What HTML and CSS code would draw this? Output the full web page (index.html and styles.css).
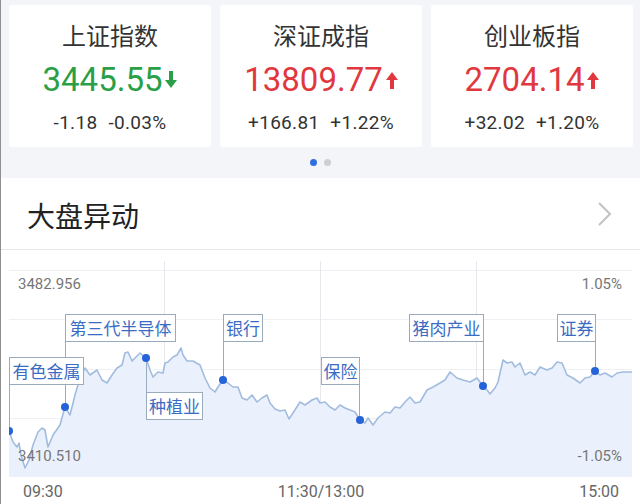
FILE: index.html
```html
<!DOCTYPE html>
<html lang="zh-CN">
<head>
<meta charset="utf-8">
<link rel="stylesheet" href="styles.css">
</head>
<body>
<div class="page">
  <div class="cards">
    <div class="card">
      <div class="c-title">上证指数</div>
      <div class="c-num down">3445.55<svg class="arrow" viewBox="0 0 12 18"><rect x="4" y="0" width="4" height="10"/><polygon points="0,9 12,9 6,17"/></svg></div>
      <div class="c-sub"><span>-1.18</span><span>-0.03%</span></div>
    </div>
    <div class="card">
      <div class="c-title">深证成指</div>
      <div class="c-num up">13809.77<svg class="arrow" viewBox="0 0 12 18"><polygon points="0,9 12,9 6,1"/><rect x="4" y="8" width="4" height="10"/></svg></div>
      <div class="c-sub"><span>+166.81</span><span>+1.22%</span></div>
    </div>
    <div class="card">
      <div class="c-title">创业板指</div>
      <div class="c-num up">2704.14<svg class="arrow" viewBox="0 0 12 18"><polygon points="0,9 12,9 6,1"/><rect x="4" y="8" width="4" height="10"/></svg></div>
      <div class="c-sub"><span>+32.02</span><span>+1.20%</span></div>
    </div>
  </div>
  <div class="dots"><span class="dot on"></span><span class="dot"></span></div>
  <div class="panel">
    <div class="head">
      <div class="head-title">大盘异动</div>
      <svg class="chev" viewBox="0 0 16 26"><polyline points="2,2 13,13 2,24"/></svg>
    </div>
    <div class="chart-wrap">
      <div class="chart">
        <svg class="plot" viewBox="9 261 623 217" width="623" height="217">
          <g class="grid">
            <line x1="9" y1="270.5" x2="632" y2="270.5"/>
            <line x1="9" y1="319.5" x2="632" y2="319.5"/>
            <line x1="9" y1="369.5" x2="632" y2="369.5"/>
            <line x1="9" y1="418.5" x2="632" y2="418.5"/>
            <line x1="9" y1="468.5" x2="632" y2="468.5"/>
            <line x1="164.5" y1="261" x2="164.5" y2="477"/>
            <line x1="320.5" y1="261" x2="320.5" y2="477"/>
            <line x1="476.5" y1="261" x2="476.5" y2="477"/>
          </g>
          <path class="area" d="M9,431 L13,442 L17,447 L19,443 L21,455 L25,468 L29,460 L33,445 L38,432 L42,428 L45,430 L48,447 L53,435 L60,425 L65,407 L70,415 L75,395 L80,378 L85,368 L90,375 L97,370 L102,380 L107,383 L112,375 L117,368 L122,365 L125,353 L128,352 L132,361 L135,358 L140,353 L146,358 L150,370 L153,377 L158,372 L163,373 L165,363 L168,362 L173,357 L177,355 L181,348 L183,355 L187,361 L193,361 L200,365 L205,378 L210,388 L215,392 L218,387 L223,380 L228,383 L233,387 L238,387 L242,398 L247,400 L252,395 L257,402 L262,398 L267,395 L270,403 L275,409 L280,411 L285,410 L289,419 L293,413 L300,402 L305,405 L312,400 L317,398 L320,403 L325,402 L330,407 L335,410 L340,405 L345,408 L350,410 L355,412 L360,420 L365,423 L368,418 L373,425 L378,418 L385,412 L390,413 L395,407 L400,408 L405,402 L410,397 L415,403 L420,402 L427,390 L433,387 L440,383 L445,380 L450,372 L457,378 L463,380 L470,382 L477,378 L483,386 L487,390 L490,394 L495,388 L498,382 L503,360 L507,363 L512,362 L515,367 L520,363 L525,375 L530,372 L535,375 L540,367 L547,370 L552,368 L557,362 L562,363 L567,375 L573,378 L580,383 L585,378 L590,377 L595,371 L600,375 L605,373 L612,377 L617,373 L623,372 L632,372 L632,477 L9,477 Z"/>
          <path class="line" d="M9,431 L13,442 L17,447 L19,443 L21,455 L25,468 L29,460 L33,445 L38,432 L42,428 L45,430 L48,447 L53,435 L60,425 L65,407 L70,415 L75,395 L80,378 L85,368 L90,375 L97,370 L102,380 L107,383 L112,375 L117,368 L122,365 L125,353 L128,352 L132,361 L135,358 L140,353 L146,358 L150,370 L153,377 L158,372 L163,373 L165,363 L168,362 L173,357 L177,355 L181,348 L183,355 L187,361 L193,361 L200,365 L205,378 L210,388 L215,392 L218,387 L223,380 L228,383 L233,387 L238,387 L242,398 L247,400 L252,395 L257,402 L262,398 L267,395 L270,403 L275,409 L280,411 L285,410 L289,419 L293,413 L300,402 L305,405 L312,400 L317,398 L320,403 L325,402 L330,407 L335,410 L340,405 L345,408 L350,410 L355,412 L360,420 L365,423 L368,418 L373,425 L378,418 L385,412 L390,413 L395,407 L400,408 L405,402 L410,397 L415,403 L420,402 L427,390 L433,387 L440,383 L445,380 L450,372 L457,378 L463,380 L470,382 L477,378 L483,386 L487,390 L490,394 L495,388 L498,382 L503,360 L507,363 L512,362 L515,367 L520,363 L525,375 L530,372 L535,375 L540,367 L547,370 L552,368 L557,362 L562,363 L567,375 L573,378 L580,383 L585,378 L590,377 L595,371 L600,375 L605,373 L612,377 L617,373 L623,372 L632,372"/>
          <text class="axis" x="18" y="289">3482.956</text>
          <text class="axis" x="622" y="289" text-anchor="end">1.05%</text>
          <text class="axis" x="18" y="461">3410.510</text>
          <text class="axis" x="622" y="461" text-anchor="end">-1.05%</text>
          <g class="conn">
            <line x1="9.5" y1="384" x2="9.5" y2="431"/>
            <line x1="65.5" y1="342" x2="65.5" y2="407"/>
            <line x1="146.5" y1="358" x2="146.5" y2="392"/>
            <line x1="223.5" y1="342" x2="223.5" y2="380"/>
            <line x1="359.5" y1="384" x2="359.5" y2="420"/>
            <line x1="483.5" y1="342" x2="483.5" y2="386"/>
            <line x1="595.5" y1="342" x2="595.5" y2="371"/>
          </g>
          <g class="tag">
            <rect x="9.5" y="357.5" width="74" height="27"/>
            <text x="46.5" y="378">有色金属</text>
            <rect x="65.5" y="314.5" width="110" height="27"/>
            <text x="120.5" y="335">第三代半导体</text>
            <rect x="146.5" y="392.5" width="56" height="27"/>
            <text x="174.5" y="413">种植业</text>
            <rect x="223.5" y="314.5" width="39" height="27"/>
            <text x="243" y="335">银行</text>
            <rect x="321.5" y="357.5" width="38" height="27"/>
            <text x="340.5" y="378">保险</text>
            <rect x="409.5" y="314.5" width="74" height="27"/>
            <text x="446.5" y="335">猪肉产业</text>
            <rect x="557.5" y="314.5" width="38" height="27"/>
            <text x="576.5" y="335">证券</text>
          </g>
          <g class="pts">
            <circle cx="9" cy="431" r="4"/>
            <circle cx="65" cy="407" r="4"/>
            <circle cx="146" cy="358" r="4"/>
            <circle cx="223" cy="380" r="4"/>
            <circle cx="360" cy="420" r="4"/>
            <circle cx="483" cy="386" r="4"/>
            <circle cx="595" cy="371" r="4"/>
          </g>
        </svg>
      </div>
      <div class="times"><span>09:30</span><span>11:30/13:00</span><span>15:00</span></div>
    </div>
  </div>
</div>
</body>
</html>
```
FILE: styles.css
```css
html, body {
  margin: 0;
  padding: 0;
}
body {
  width: 640px;
  height: 504px;
  overflow: hidden;
  background: #f4f5f9;
  font-family: "Roboto", "Noto Sans CJK SC", sans-serif;
}
.page {
  border-left: 1px solid #8f8f8f;
  height: 504px;
  box-sizing: border-box;
  display: flex;
  flex-direction: column;
}
.cards {
  display: grid;
  grid-template-columns: repeat(3, 1fr);
  gap: 9px;
  padding: 5px 7px 0 8px;
}
.card {
  background: #fff;
  border-radius: 3px;
  height: 142px;
  display: flex;
  flex-direction: column;
  align-items: center;
}
.c-title {
  margin-top: 14px;
  height: 32px;
  line-height: 32px;
  font-size: 24px;
  color: #333;
  font-family: "Noto Sans CJK SC", sans-serif;
}
.c-num {
  margin-top: 9px;
  height: 40px;
  line-height: 40px;
  font-size: 33px;
  display: flex;
  align-items: center;
  gap: 3px;
}
.c-num.down { color: #2a9f47; fill: #2a9f47; }
.c-num.up { color: #e0383e; fill: #e0383e; }
.arrow {
  width: 12px;
  height: 18px;
  margin-top: -1px;
}
.c-sub {
  margin-top: 11px;
  height: 24px;
  line-height: 24px;
  font-size: 19px;
  letter-spacing: 0.3px;
  color: #333;
  display: flex;
  gap: 11px;
}
.dots {
  height: 31px;
  display: flex;
  justify-content: center;
  align-items: center;
  gap: 7px;
}
.dot {
  width: 7px;
  height: 7px;
  border-radius: 50%;
  background: #cfcfd3;
}
.dot.on { background: #2f6fe0; }
.panel {
  flex: 1;
  background: #fff;
  display: flex;
  flex-direction: column;
}
.head {
  height: 71px;
  border-bottom: 1px solid #e6e6e8;
  display: flex;
  align-items: center;
  justify-content: space-between;
  padding: 0 27px 0 26px;
}
.head-title {
  font-family: "Noto Sans CJK SC", sans-serif;
  font-size: 28px;
  color: #222;
  margin-top: 2px;
}
.chev {
  width: 16px;
  height: 26px;
  fill: none;
  stroke: #c2c2c4;
  stroke-width: 2;
}
.chart-wrap {
  padding: 11px 7px 0 8px;
}
.chart {
  width: 623px;
  height: 217px;
  box-sizing: border-box;
}
.plot {
  display: block;
}
.grid line {
  stroke: #eef0f4;
  stroke-width: 1;
}
.grid line:nth-child(n+6) { stroke: #e6e8ec; }
.area {
  fill: #eaf1fc;
}
.line {
  fill: none;
  stroke: #a2bcdf;
  stroke-width: 1.6;
  stroke-linejoin: round;
}
.axis {
  font-family: "Roboto", sans-serif;
  font-size: 15px;
  fill: #777;
}
.conn line {
  stroke: #9aabbe;
  stroke-width: 1;
}
.tag rect {
  fill: #fff;
  stroke: #9aabbe;
  stroke-width: 1;
}
.tag text {
  font-family: "Noto Sans CJK SC", sans-serif;
  font-size: 17px;
  fill: #3b6cc4;
  text-anchor: middle;
}
.pts circle {
  fill: #2563d9;
}
.times {
  display: flex;
  justify-content: space-between;
  padding: 0 14px 0 14px;
  height: 26px;
  line-height: 28px;
  font-size: 16px;
  color: #666;
}
```
